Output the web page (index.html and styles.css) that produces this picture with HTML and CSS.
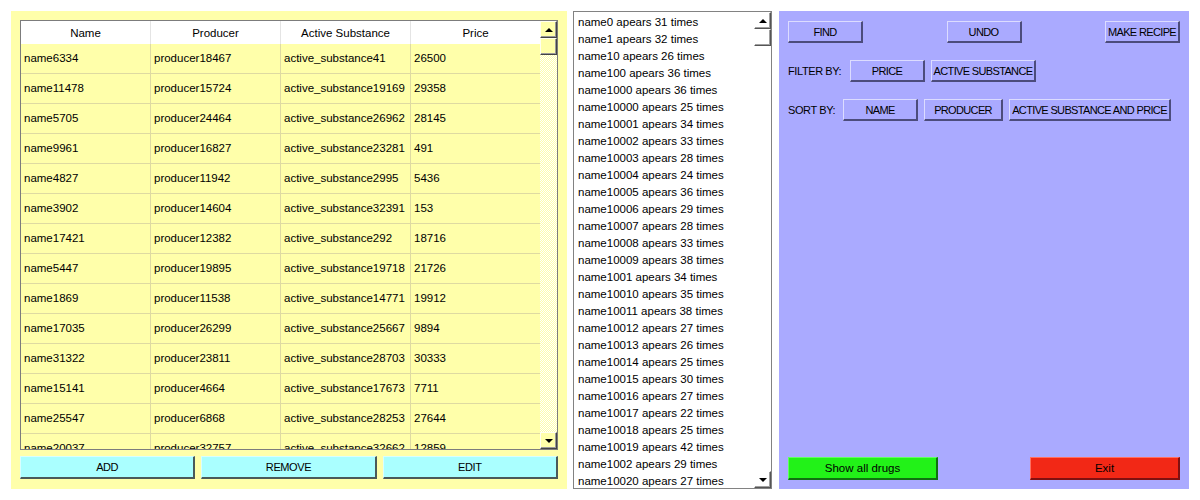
FILE: index.html
```html
<!DOCTYPE html>
<html>
<head>
<meta charset="utf-8">
<link rel="stylesheet" href="styles.css">
</head>
<body>
<div class="app">
  <section class="panel-yellow">
    <div class="table">
      <div class="grid">
        <div class="thead">
          <div class="th">Name</div>
          <div class="th">Producer</div>
          <div class="th">Active Substance</div>
          <div class="th">Price</div>
        </div>
        <div class="tbody">
          <div class="tr"><div class="td">name6334</div><div class="td">producer18467</div><div class="td">active_substance41</div><div class="td">26500</div></div>
          <div class="tr"><div class="td">name11478</div><div class="td">producer15724</div><div class="td">active_substance19169</div><div class="td">29358</div></div>
          <div class="tr"><div class="td">name5705</div><div class="td">producer24464</div><div class="td">active_substance26962</div><div class="td">28145</div></div>
          <div class="tr"><div class="td">name9961</div><div class="td">producer16827</div><div class="td">active_substance23281</div><div class="td">491</div></div>
          <div class="tr"><div class="td">name4827</div><div class="td">producer11942</div><div class="td">active_substance2995</div><div class="td">5436</div></div>
          <div class="tr"><div class="td">name3902</div><div class="td">producer14604</div><div class="td">active_substance32391</div><div class="td">153</div></div>
          <div class="tr"><div class="td">name17421</div><div class="td">producer12382</div><div class="td">active_substance292</div><div class="td">18716</div></div>
          <div class="tr"><div class="td">name5447</div><div class="td">producer19895</div><div class="td">active_substance19718</div><div class="td">21726</div></div>
          <div class="tr"><div class="td">name1869</div><div class="td">producer11538</div><div class="td">active_substance14771</div><div class="td">19912</div></div>
          <div class="tr"><div class="td">name17035</div><div class="td">producer26299</div><div class="td">active_substance25667</div><div class="td">9894</div></div>
          <div class="tr"><div class="td">name31322</div><div class="td">producer23811</div><div class="td">active_substance28703</div><div class="td">30333</div></div>
          <div class="tr"><div class="td">name15141</div><div class="td">producer4664</div><div class="td">active_substance17673</div><div class="td">7711</div></div>
          <div class="tr"><div class="td">name25547</div><div class="td">producer6868</div><div class="td">active_substance28253</div><div class="td">27644</div></div>
          <div class="tr"><div class="td">name20037</div><div class="td">producer32757</div><div class="td">active_substance32662</div><div class="td">12859</div></div>
        </div>
      </div>
      <div class="vscroll vscroll-yellow">
        <div class="sbtn"><span class="arrow-up"></span></div>
        <div class="thumb"></div>
        <div class="track"></div>
        <div class="sbtn"><span class="arrow-down"></span></div>
      </div>
    </div>
    <div class="actions">
      <button class="btn btn-cyan">ADD</button>
      <button class="btn btn-cyan">REMOVE</button>
      <button class="btn btn-cyan">EDIT</button>
    </div>
  </section>

  <section class="list">
    <div class="items">
      <div class="item">name0 apears 31 times</div>
      <div class="item">name1 apears 32 times</div>
      <div class="item">name10 apears 26 times</div>
      <div class="item">name100 apears 36 times</div>
      <div class="item">name1000 apears 36 times</div>
      <div class="item">name10000 apears 25 times</div>
      <div class="item">name10001 apears 34 times</div>
      <div class="item">name10002 apears 33 times</div>
      <div class="item">name10003 apears 28 times</div>
      <div class="item">name10004 apears 24 times</div>
      <div class="item">name10005 apears 36 times</div>
      <div class="item">name10006 apears 29 times</div>
      <div class="item">name10007 apears 28 times</div>
      <div class="item">name10008 apears 33 times</div>
      <div class="item">name10009 apears 38 times</div>
      <div class="item">name1001 apears 34 times</div>
      <div class="item">name10010 apears 35 times</div>
      <div class="item">name10011 apears 38 times</div>
      <div class="item">name10012 apears 27 times</div>
      <div class="item">name10013 apears 26 times</div>
      <div class="item">name10014 apears 25 times</div>
      <div class="item">name10015 apears 30 times</div>
      <div class="item">name10016 apears 27 times</div>
      <div class="item">name10017 apears 22 times</div>
      <div class="item">name10018 apears 25 times</div>
      <div class="item">name10019 apears 42 times</div>
      <div class="item">name1002 apears 29 times</div>
      <div class="item">name10020 apears 27 times</div>
    </div>
    <div class="vscroll vscroll-white">
      <div class="sbtn"><span class="arrow-up"></span></div>
      <div class="thumb"></div>
      <div class="track"></div>
      <div class="sbtn"><span class="arrow-down"></span></div>
    </div>
  </section>

  <section class="panel-purple">
    <div class="row row-top">
      <button class="btn btn-purple w75">FIND</button>
      <button class="btn btn-purple w75">UNDO</button>
      <button class="btn btn-purple w75">MAKE RECIPE</button>
    </div>
    <div class="row row-filter">
      <span class="label label-filter">FILTER BY:</span>
      <button class="btn btn-purple w75">PRICE</button>
      <button class="btn btn-purple w105">ACTIVE SUBSTANCE</button>
    </div>
    <div class="row row-sort">
      <span class="label label-sort">SORT BY:</span>
      <button class="btn btn-purple w75">NAME</button>
      <button class="btn btn-purple w79">PRODUCER</button>
      <button class="btn btn-purple w162">ACTIVE SUBSTANCE AND PRICE</button>
    </div>
    <div class="row row-bottom">
      <button class="btn btn-green">Show all drugs</button>
      <button class="btn btn-red">Exit</button>
    </div>
  </section>
</div>
</body>
</html>
```

FILE: styles.css
```css
* { box-sizing: border-box; }

body {
  margin: 0;
  background: #ffffff;
  font-family: "Liberation Sans", Arial, sans-serif;
  font-size: 11.5px;
  color: #000;
}

.app {
  display: flex;
  align-items: flex-start;
  padding: 11px;
}

/* ---------- yellow panel ---------- */
.panel-yellow {
  width: 556px;
  height: 478px;
  background: #ffffaa;
  padding: 9px 9px 10px 9px;
  display: flex;
  flex-direction: column;
}

.table {
  width: 538px;
  height: 431px;
  border: 1px solid #7c7c7c;
  display: flex;
  overflow: hidden;
}

.grid {
  width: 519px;
  display: flex;
  flex-direction: column;
  overflow: hidden;
}

.thead {
  display: grid;
  grid-template-columns: 130px 130px 130px 129px;
  height: 23px;
  background: #ffffff;
  flex: none;
}

.th {
  text-align: center;
  line-height: 24px;
  border-right: 1px solid #e4e4e4;
}
.th:last-child { border-right: none; }

.tbody {
  flex: 1;
  overflow: hidden;
}

.tr {
  display: grid;
  grid-template-columns: 130px 130px 130px 129px;
  height: 30px;
  border-bottom: 1px solid #dedaa2;
  background: #ffffaa;
}

.td {
  padding-left: 3px;
  line-height: 29px;
  border-right: 1px solid #dedaa2;
  white-space: nowrap;
  overflow: hidden;
}
.td:last-child { border-right: none; }

/* ---------- scrollbars ---------- */
.vscroll {
  width: 17px;
  flex: none;
  display: flex;
  flex-direction: column;
}

.vscroll .sbtn,
.vscroll .thumb {
  height: 17px;
  flex: none;
  display: flex;
  align-items: center;
  justify-content: center;
}

.vscroll .track { flex: 1; }

.vscroll-yellow {
  background: #ffffaa;
}
.vscroll-yellow .sbtn,
.vscroll-yellow .thumb {
  background: #ffffaa;
  border-style: solid;
  border-width: 1px;
  border-color: #fffff0 #444 #444 #fffff0;
  box-shadow: inset -1px -1px 0 #9a9a9a;
}
.vscroll-yellow .track {
  background: repeating-conic-gradient(#ffffff 0 25%, #ffffaa 0 50%) 0 0 / 2px 2px;
}

.vscroll-white {
  background: #ffffff;
}
.vscroll-white .sbtn,
.vscroll-white .thumb {
  background: #ffffff;
  border-style: solid;
  border-width: 1px;
  border-color: #ffffff #555 #555 #ffffff;
  box-shadow: inset -1px -1px 0 #a0a0a0;
}
.vscroll-white .track {
  background: #ffffff;
}

.arrow-up {
  width: 0;
  height: 0;
  border-left: 4px solid transparent;
  border-right: 4px solid transparent;
  border-bottom: 4px solid #000;
}
.arrow-down {
  width: 0;
  height: 0;
  border-left: 4px solid transparent;
  border-right: 4px solid transparent;
  border-top: 4px solid #000;
}

/* ---------- buttons ---------- */
.btn {
  font-family: "Liberation Sans", Arial, sans-serif;
  font-size: 11px;
  letter-spacing: -0.4px;
  color: #000;
  padding: 0;
  margin: 0;
  height: 22px;
  border-style: solid;
  border-width: 1px 2px 2px 1px;
  text-align: center;
  white-space: nowrap;
}

.actions {
  margin-top: 6px;
  display: grid;
  grid-template-columns: 1fr 1fr 1fr;
  gap: 6px;
}

.btn-cyan {
  background: #aaffff;
  border-color: #d8ffff #4a5a5a #4a5a5a #d8ffff;
  height: 23px;
}

/* ---------- list ---------- */
.list {
  width: 199px;
  height: 478px;
  margin-left: 6px;
  border: 1px solid #828282;
  background: #ffffff;
  display: flex;
}

.items {
  flex: 1;
  padding: 2px 0 0 4px;
  overflow: hidden;
}

.item {
  height: 17px;
  line-height: 17px;
  white-space: nowrap;
}

/* ---------- purple panel ---------- */
.panel-purple {
  width: 410px;
  height: 478px;
  margin-left: 7px;
  background: #aaaaff;
  padding: 10px 9px 9px 9px;
  display: flex;
  flex-direction: column;
}

.row {
  display: flex;
  align-items: center;
}

.row-top { justify-content: space-between; }
.row-filter { margin-top: 17px; gap: 6px; }
.row-sort { margin-top: 17px; gap: 6px; }

.label {
  white-space: nowrap;
  font-size: 11px;
  letter-spacing: -0.4px;
}
.label-filter { width: 56px; }
.label-sort { width: 49px; }

.btn-purple {
  background: #aaaaff;
  border-color: #dcdcff #4c4c7c #4c4c7c #dcdcff;
  letter-spacing: -0.65px;
}

.w75 { width: 75px; }
.w79 { width: 79px; }
.w105 { width: 105px; }
.w162 { width: 162px; }

.row-bottom {
  margin-top: auto;
  justify-content: space-between;
}

.btn-green {
  width: 150px;
  height: 23px;
  background: #22f218;
  border-color: #60ff60 #107010 #107010 #60ff60;
  font-size: 11.5px;
  letter-spacing: 0;
}

.btn-red {
  width: 150px;
  height: 23px;
  background: #f22816;
  border-color: #ff7060 #801010 #801010 #ff7060;
  font-size: 11.5px;
  letter-spacing: 0;
}
```
